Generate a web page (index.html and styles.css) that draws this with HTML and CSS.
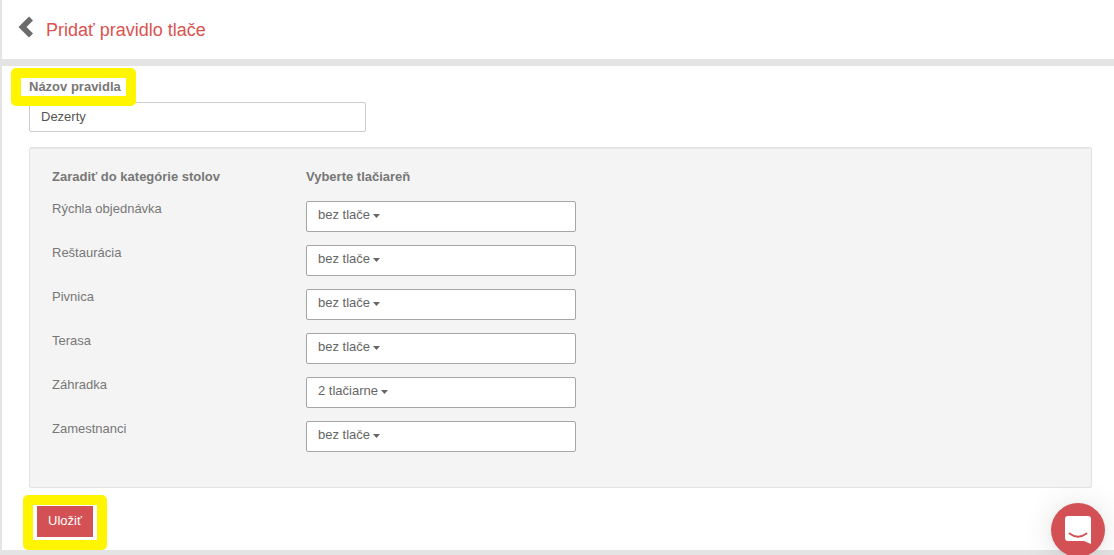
FILE: index.html
```html
<!DOCTYPE html>
<html lang="sk">
<head>
<meta charset="utf-8">
<title>Pridať pravidlo tlače</title>
<link rel="stylesheet" href="styles.css">
</head>
<body>
<header class="page-header">
  <a class="back" href="#" aria-label="Späť">
    <svg width="16" height="22" viewBox="0 0 16 22"><path d="M11 0.5 15 4.5 8.5 11 15 17.5 11 21.5 0.5 11Z" fill="#6b6b6b"/></svg>
  </a>
  <h1 class="title">Pridať pravidlo tlače</h1>
</header>
<main class="content">
  <form class="rule-form">
    <div class="name-field">
      <label class="name-label marked" for="rule-name">Názov pravidla</label>
      <input class="name-input" id="rule-name" type="text" value="Dezerty">
    </div>
    <section class="panel">
      <div class="row heading"><span>Zaradiť do kategórie stolov</span><span>Vyberte tlačiareň</span></div>
      <div class="row">
        <label for="p1">Rýchla objednávka</label>
        <div class="picker"><select id="p1"><option>bez tlače</option><option>2 tlačiarne</option></select></div>
      </div>
      <div class="row">
        <label for="p2">Reštaurácia</label>
        <div class="picker"><select id="p2"><option>bez tlače</option><option>2 tlačiarne</option></select></div>
      </div>
      <div class="row">
        <label for="p3">Pivnica</label>
        <div class="picker"><select id="p3"><option>bez tlače</option><option>2 tlačiarne</option></select></div>
      </div>
      <div class="row">
        <label for="p4">Terasa</label>
        <div class="picker"><select id="p4"><option>bez tlače</option><option>2 tlačiarne</option></select></div>
      </div>
      <div class="row">
        <label for="p5">Záhradka</label>
        <div class="picker"><select id="p5"><option>bez tlače</option><option selected>2 tlačiarne</option></select></div>
      </div>
      <div class="row">
        <label for="p6">Zamestnanci</label>
        <div class="picker"><select id="p6"><option>bez tlače</option><option>2 tlačiarne</option></select></div>
      </div>
    </section>
    <div class="actions marked">
      <button class="save" type="submit">Uložiť</button>
    </div>
  </form>
</main>
<button class="chat" type="button" aria-label="Chat">
  <svg width="26" height="28" viewBox="0 0 26 28"><path d="M3 0H23Q26 0 26 3V28L19 25H3Q0 25 0 22V3Q0 0 3 0Z" fill="#fff"/><path d="M4.500 17.500Q13 24 21.500 17.500" fill="none" stroke="#d35154" stroke-width="1.800" stroke-linecap="round"/></svg>
</button>
</body>
</html>
```
FILE: styles.css
```css
* {
  box-sizing: border-box;
}

body {
  margin: 0;
  padding-left: 2px;
  background: #e4e4e4;
  color: #777;
  font: 13px/18px "Liberation Sans", Arial, sans-serif;
}

.page-header {
  display: flex;
  gap: 12px;
  padding: 16px 16px 17px;
  background: #fff;
}

.back,
.back svg {
  display: block;
}

.title {
  margin: 0;
  padding-top: 2px;
  color: #d9534f;
  font-size: 18px;
  line-height: 24px;
  font-weight: 400;
}

.content {
  margin-top: 7px;
  padding: 12px 22px 10px 27px;
  background: #fff;
}

.name-field {
  display: flex;
  flex-direction: column;
  align-items: flex-start;
}

.name-label {
  margin-bottom: 6px;
  font-weight: 700;
}

.marked {
  position: relative;
}

/* Yellow frame drawn over the surrounding content */
.marked::after {
  content: "";
  position: absolute;
  inset: -10px -15px -10px -18px;
  border: 10px solid #fff500;
  border-radius: 5px;
  pointer-events: none;
}

.name-input {
  width: 337px;
  max-width: 100%;
  height: 30px;
  padding: 0 11px 2px;
  border: 1px solid #ccc;
  border-radius: 2px;
  background: #fff;
  color: #555;
  font: inherit;
}

.panel {
  margin-top: 15px;
  padding: 20px 22px 22px;
  border: 1px solid #e3e3e3;
  border-radius: 2px;
  background: #f4f4f4;
  box-shadow: inset 0 1px 1px rgba(0, 0, 0, 0.05);
}

.row {
  display: grid;
  grid-template-columns: 254px minmax(0, 270px);
  align-items: start;
  margin-bottom: 13px;
}

.heading {
  margin-bottom: 15px;
  font-weight: 700;
}

.row label {
  margin-top: -1px;
}

.picker {
  display: flex;
  height: 31px;
  padding: 4px 11px;
  border: 1px solid #a6a6a6;
  border-radius: 2px;
  background: #fff;
}

.picker select {
  field-sizing: content;
  appearance: none;
  height: 18px;
  padding: 0 10px 0 0;
  border: 0;
  background: url("data:image/svg+xml,%3Csvg xmlns='http://www.w3.org/2000/svg' width='7' height='4'%3E%3Cpath d='M0 0H7L3.5 4Z' fill='%23666'/%3E%3C/svg%3E") no-repeat right 8px;
  color: #666;
  font: inherit;
}

.actions {
  width: fit-content;
  margin: 18px 0 0 4px;
  padding: 0 4px 3px;
}

.actions.marked::after {
  inset: -11px -10px -10px;
}

.save {
  display: block;
  height: 31px;
  padding: 0 11px 2px;
  border: 0;
  background: #d35154;
  color: #fff;
  font: inherit;
}

.chat {
  position: fixed;
  right: 9px;
  bottom: -2px;
  display: grid;
  place-items: center;
  width: 54px;
  height: 54px;
  padding: 0;
  border: 0;
  border-radius: 50%;
  background: #d35154;
  box-shadow: 0 1px 6px rgba(0, 0, 0, 0.06), 0 2px 32px rgba(0, 0, 0, 0.12);
}
```
